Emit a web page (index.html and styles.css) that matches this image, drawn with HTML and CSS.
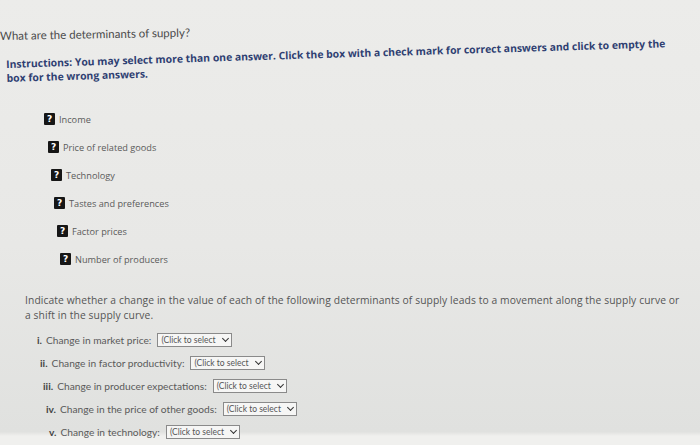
FILE: index.html
```html
<!DOCTYPE html>
<html lang="en">
<head>
<meta charset="utf-8">
<title>Determinants of supply</title>
<link rel="stylesheet" href="styles.css">
</head>
<body>
<main class="page">
  <p class="question">What are the determinants of supply?</p>
  <p class="instr">Instructions: You may select more than one answer. Click the box with a check mark for correct answers and click to empty the box for the wrong answers.</p>

  <ul class="choices">
    <li class="choice c1"><span class="qbox">?</span>Income</li>
    <li class="choice c2"><span class="qbox">?</span>Price of related goods</li>
    <li class="choice c3"><span class="qbox">?</span>Technology</li>
    <li class="choice c4"><span class="qbox">?</span>Tastes and preferences</li>
    <li class="choice c5"><span class="qbox">?</span>Factor prices</li>
    <li class="choice c6"><span class="qbox">?</span>Number of producers</li>
  </ul>

  <p class="prompt">Indicate whether a change in the value of each of the following determinants of supply leads to a movement along the supply curve or a shift in the supply curve.</p>

  <ol class="subs">
    <li class="sub s1"><b>i.</b><span class="lbl">Change in market price:</span><span class="sel">(Click to select<span class="chev"></span></span></li>
    <li class="sub s2"><b>ii.</b><span class="lbl">Change in factor productivity:</span><span class="sel">(Click to select<span class="chev"></span></span></li>
    <li class="sub s3"><b>iii.</b><span class="lbl">Change in producer expectations:</span><span class="sel">(Click to select<span class="chev"></span></span></li>
    <li class="sub s4"><b>iv.</b><span class="lbl">Change in the price of other goods:</span><span class="sel">(Click to select<span class="chev"></span></span></li>
    <li class="sub s5"><b>v.</b><span class="lbl">Change in technology:</span><span class="sel">(Click to select<span class="chev"></span></span></li>
  </ol>
</main>
</body>
</html>
```

FILE: styles.css
```css
html, body {
  margin: 0;
  padding: 0;
}
body {
  width: 700px;
  height: 445px;
  overflow: hidden;
  font-family: Lato, "Open Sans", "Liberation Sans", sans-serif;
  background: linear-gradient(180deg, #ececea 0%, #e8e8e6 55%, #e0e1df 97%, #f0f0ee 98%);
  color: #555;
}
.page {
  padding-top: 29px;
}
.question {
  margin: 0;
  font-size: 11.5px;
  line-height: 14px;
  color: #4a4a4a;
  transform: rotate(-1deg);
  transform-origin: left center;
}
.instr {
  margin: 14px 20px 0 6px;
  font-family: "Open Sans", "Liberation Sans", sans-serif;
  font-weight: 700;
  font-size: 10.4px;
  line-height: 14px;
  color: #2f3f72;
  transform: rotate(-1.8deg);
  transform-origin: left top;
}
.choices {
  list-style: none;
  margin: 20px 0 0;
  padding: 0;
}
.choice {
  display: flex;
  align-items: center;
  height: 28px;
  font-family: "Open Sans", Lato, sans-serif;
  font-size: 9.2px;
  color: #5a5a5a;
}
.qbox {
  display: inline-flex;
  align-items: center;
  justify-content: center;
  width: 11px;
  height: 12px;
  margin-right: 4px;
  background: #161616;
  border-radius: 1px;
  color: #fff;
  font-family: "DejaVu Sans", sans-serif;
  font-weight: 700;
  font-size: 9px;
  line-height: 1;
}
.c1 { padding-left: 44px; }
.c2 { padding-left: 48px; }
.c3 { padding-left: 51px; }
.c4 { padding-left: 54px; }
.c5 { padding-left: 57px; }
.c6 { padding-left: 60px; }

.prompt {
  margin: 20px 16px 0 25px;
  font-family: "Open Sans", Lato, sans-serif;
  font-size: 10.3px;
  letter-spacing: 0.1px;
  line-height: 15px;
  color: #555;
}
.subs {
  list-style: none;
  margin: 5px 0 0;
  padding: 0;
}
.sub {
  display: flex;
  align-items: center;
  height: 23px;
  font-size: 10.2px;
  color: #5a5a5a;
  white-space: pre;
}
.sub b {
  font-weight: 700;
  color: #444;
}
.lbl {
  margin-left: 4px;
}
.s1 { padding-left: 37px; }
.s2 { padding-left: 40px; }
.s3 { padding-left: 43px; }
.s4 { padding-left: 46px; }
.s5 { padding-left: 49px; }
.sel {
  display: inline-flex;
  align-items: center;
  height: 12px;
  margin-left: 6px;
  padding: 0 3px 0 3px;
  border: 1px solid #8a8a8a;
  background: #f6f6f5;
  font-size: 8.5px;
  color: #555;
}
.chev {
  width: 4px;
  height: 4px;
  margin: -3px 0 0 7px;
  border-right: 1.6px solid #333;
  border-bottom: 1.6px solid #333;
  transform: rotate(45deg);
}
```
